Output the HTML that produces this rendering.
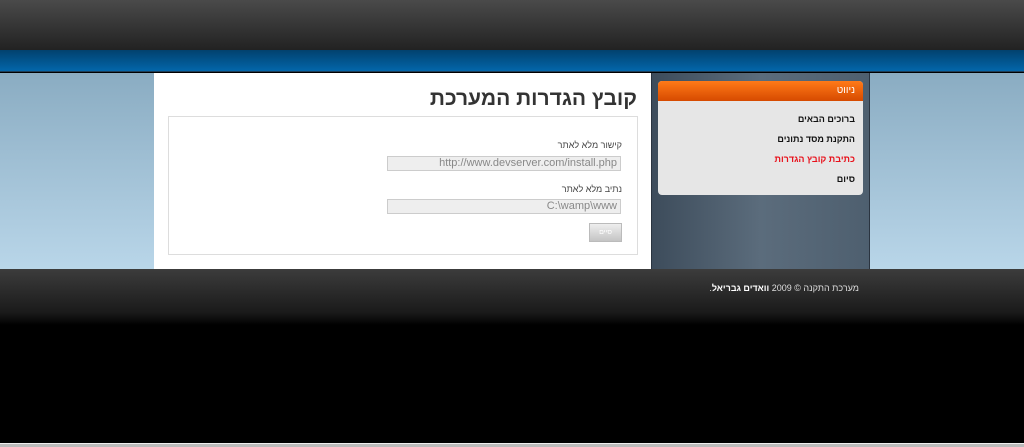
<!DOCTYPE html>
<html><head><meta charset="utf-8"><style>
*{margin:0;padding:0;box-sizing:border-box}
body{width:1024px;height:447px;overflow:hidden;background:#000;font-family:"Liberation Sans","Noto Sans CJK SC",sans-serif;position:relative}
.top{position:absolute;left:0;top:0;width:1024px;height:50px;background:linear-gradient(#4a4a4a,#2a2a2a 80%,#222)}
.blue{position:absolute;left:0;top:50px;width:1024px;height:22px;background:linear-gradient(#02416e,#0366aa);border-bottom:1px solid #1c3d57}
.mid{position:absolute;left:0;top:73px;width:1024px;height:196px;background:linear-gradient(#8aacc2,#b9d6e9)}
.content{position:absolute;left:154px;top:73px;width:497px;height:196px;background:#fff}
.side{position:absolute;left:651px;top:73px;width:219px;height:196px;background:linear-gradient(90deg,#3d4c5b,#5b6c7c 50%,#4e5f6f);border-left:1px solid #2a3440;border-right:1px solid #2a3440}
.footer{position:absolute;left:0;top:269px;width:1024px;height:175px;background:linear-gradient(#3c3c3c,#1a1a1a 25%,#000 32%,#000)}
.bline{position:absolute;left:0;top:443px;width:1024px;height:4px;background:#bbb;border-top:1px solid #eee}
h1{position:absolute;right:387px;top:87px;font-size:21px;color:#333;font-weight:bold;direction:rtl;white-space:nowrap}
.box{position:absolute;left:168px;top:116px;width:470px;height:139px;border:1px solid #ddd;direction:rtl}
.lbl{position:absolute;right:15px;font-size:9px;color:#444}
.inp{position:absolute;left:218px;width:234px;height:15px;background:#eee;border:1px solid #ccc;font-size:11px;color:#888;text-align:right;padding-right:3px;line-height:13px;direction:ltr}
.btn{position:absolute;left:420px;top:106px;width:33px;height:19px;background:linear-gradient(#eee,#c4c4c4);border:1px solid #bbb;font-size:7px;color:#fff;text-align:center;line-height:17px}
.menu{position:absolute;left:658px;top:81px;width:205px;height:114px;background:#e6e6e6;border-radius:4px;overflow:hidden;direction:rtl}
.mh{height:20px;background:linear-gradient(#ff7a18,#d64a00);color:#fff;font-size:10px;padding-right:8px;line-height:19px}
.mi{position:absolute;right:8px;font-size:9px;font-weight:bold;color:#111}
.ft{position:absolute;right:165px;top:283px;font-size:9px;color:#ddd;direction:rtl}
</style></head><body>
<div class="top"></div><div class="blue"></div><div class="mid"></div>
<div class="content"></div><div class="side"></div>
<div class="footer"></div><div class="bline"></div>
<h1>קובץ הגדרות המערכת</h1>
<div class="box">
<div class="lbl" style="top:23px">קישור מלא לאתר</div>
<div class="inp" style="top:39px">http://www.devserver.com/install.php</div>
<div class="lbl" style="top:67px">נתיב מלא לאתר</div>
<div class="inp" style="top:82px">C:\wamp\www</div>
<div class="btn">סיים</div>
</div>
<div class="menu"><div class="mh">ניווט</div>
<div class="mi" style="top:33px">ברוכים הבאים</div>
<div class="mi" style="top:53px">התקנת מסד נתונים</div>
<div class="mi" style="top:73px;color:#e8101a">כתיבת קובץ הגדרות</div>
<div class="mi" style="top:93px">סיום</div>
</div>
<div class="ft">מערכת התקנה © 2009 <b style="color:#fff">וואדים גבריאל</b>.</div>
</body></html>
